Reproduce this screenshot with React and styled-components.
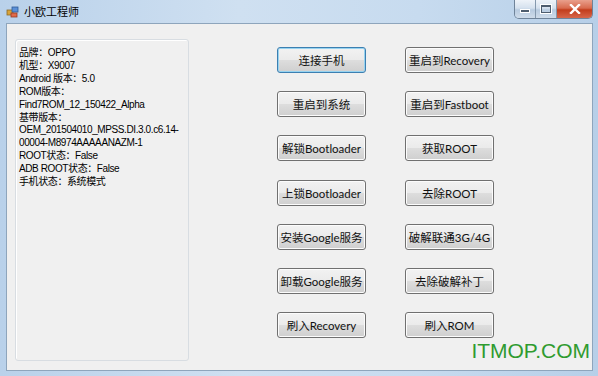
import React from 'react';
import styled, { createGlobalStyle } from 'styled-components';

const info = [
  '品牌：OPPO',
  '机型：X9007',
  'Android 版本：5.0',
  'ROM版本：',
  'Find7ROM_12_150422_Alpha',
  '基带版本：',
  'OEM_201504010_MPSS.DI.3.0.c6.14-',
  '00004-M8974AAAAANAZM-1',
  'ROOT状态：False',
  'ADB ROOT状态：False',
  '手机状态：系统模式',
];

const actions = [
  ['连接手机', '重启到Recovery'],
  ['重启到系统', '重启到Fastboot'],
  ['解锁Bootloader', '获取ROOT'],
  ['上锁Bootloader', '去除ROOT'],
  ['安装Google服务', '破解联通3G/4G'],
  ['卸载Google服务', '去除破解补丁'],
  ['刷入Recovery', '刷入ROM'],
];

const App = () => (
  <>
    <GlobalStyle />
    <Window>
      <TitleBar>
        <AppIcon viewBox="0 0 14 14">
          <rect x="1" y="5" width="6" height="5" fill="#d9a43a" stroke="#8a6a2a" strokeWidth="0.8" />
          <rect x="6" y="2" width="6" height="5" fill="#5b8fd6" stroke="#2f5c9a" strokeWidth="0.8" />
          <rect x="5" y="8" width="6" height="4" fill="#e06a4a" stroke="#9a3a22" strokeWidth="0.8" />
        </AppIcon>
        <Title>小欧工程师</Title>
        <Controls>
          <CapButton>
            <MinGlyph />
          </CapButton>
          <CapButton>
            <MaxGlyph />
          </CapButton>
          <CloseButton>
            <svg width="12" height="10" viewBox="0 0 12 10">
              <path d="M2 1 L10 9 M10 1 L2 9" stroke="#fff" strokeWidth="2.4" strokeLinecap="square" />
            </svg>
          </CloseButton>
        </Controls>
      </TitleBar>
      <Client>
        <InfoBox>
          {info.map(line => (
            <InfoLine key={line}>{line}</InfoLine>
          ))}
        </InfoBox>
        <ButtonGrid>
          {actions.flat().map((label, i) => (
            <ActionButton key={label} focused={i === 0}>{label}</ActionButton>
          ))}
        </ButtonGrid>
        <Watermark>ITMOP.COM</Watermark>
      </Client>
    </Window>
  </>
);

const GlobalStyle = createGlobalStyle`
  html, body {
    margin: 0;
    padding: 0;
    background: #f0f0f0;
  }
  body {
    font-family: Lato, "Noto Sans CJK SC", sans-serif;
  }
`;

const Window = styled.div`
  width: 598px;
  height: 376px;
  box-sizing: border-box;
  display: flex;
  flex-direction: column;
  padding: 0 5px 5px 6px;
  background: linear-gradient(90deg, #b9d1ea 0%, #cfe0f1 40%, #c7dbef 70%, #b7cfe8 100%);
`;

const TitleBar = styled.div`
  height: 23px;
  display: flex;
  align-items: flex-start;
`;

const AppIcon = styled.svg`
  width: 14px;
  height: 14px;
  margin: 5px 0 0 0;
`;

const Title = styled.div`
  margin: 4px 0 0 4px;
  font-family: "Noto Sans CJK SC", sans-serif;
  font-size: 11px;
  line-height: 14px;
  color: #000;
`;

const Controls = styled.div`
  margin-left: auto;
  display: flex;
  height: 18px;
  border: 1px solid #6f8399;
  border-top: none;
  border-radius: 0 0 5px 5px;
  overflow: hidden;
`;

const CapButton = styled.div`
  width: 20px;
  display: flex;
  align-items: center;
  justify-content: center;
  background: linear-gradient(180deg, #eef3f9 0%, #d5e1ee 45%, #b8cbe0 55%, #cfdcea 100%);
  border-right: 1px solid #8498ad;
`;

const MinGlyph = styled.div`
  width: 8px;
  height: 2px;
  margin-top: 4px;
  background: #4e5d6e;
  border: 1px solid #fff;
`;

const MaxGlyph = styled.div`
  width: 8px;
  height: 5px;
  border: 1px solid #4e5d6e;
  border-top-width: 2px;
  box-shadow: 0 0 0 1px #fff;
`;

const CloseButton = styled.div`
  width: 35px;
  display: flex;
  align-items: center;
  justify-content: center;
  background: linear-gradient(180deg, #e9a08c 0%, #d86b4f 45%, #c23d1c 55%, #d7664a 100%);
`;

const Client = styled.div`
  flex: 1;
  position: relative;
  display: flex;
  align-items: flex-start;
  padding: 15px 0 0 8px;
  background: #f0f0f0;
  border: 1px solid #8ea5bc;
`;

const InfoBox = styled.div`
  width: 169px;
  height: 313px;
  padding: 7px 0 0 3px;
  border: 1px solid #d8dde2;
  border-radius: 3px;
  box-shadow: inset 1px 1px 0 #fff;
  font-family: "Liberation Sans", "Noto Sans CJK SC", sans-serif;
  font-size: 10px;
  letter-spacing: -0.4px;
  color: #000;
`;

const InfoLine = styled.div`
  line-height: 12.9px;
  white-space: nowrap;
`;

const ButtonGrid = styled.div`
  margin: 8px 0 0 88px;
  display: grid;
  grid-template-columns: repeat(2, 89px);
  grid-auto-rows: 26px;
  column-gap: 39px;
  row-gap: 18.2px;
`;

const ActionButton = styled.div`
  box-sizing: border-box;
  display: flex;
  align-items: center;
  justify-content: center;
  border: 1px solid ${props => (props.focused ? '#3c7fb1' : '#707070')};
  border-radius: 3px;
  background: linear-gradient(180deg, #f2f2f2 0%, #ebebeb 48%, #dddddd 52%, #cfcfcf 100%);
  box-shadow: inset 0 0 0 1px ${props => (props.focused ? '#97d3f0' : '#fcfcfc')};
  font-family: Lato, "Noto Sans CJK SC", sans-serif;
  font-size: 11.5px;
  color: #111;
  white-space: nowrap;
`;

const Watermark = styled.div`
  position: absolute;
  right: 2px;
  bottom: 7px;
  font-family: "Liberation Sans", Arial, sans-serif;
  font-size: 21px;
  color: #2f9b2f;
  line-height: 24px;
`;

export default App;
